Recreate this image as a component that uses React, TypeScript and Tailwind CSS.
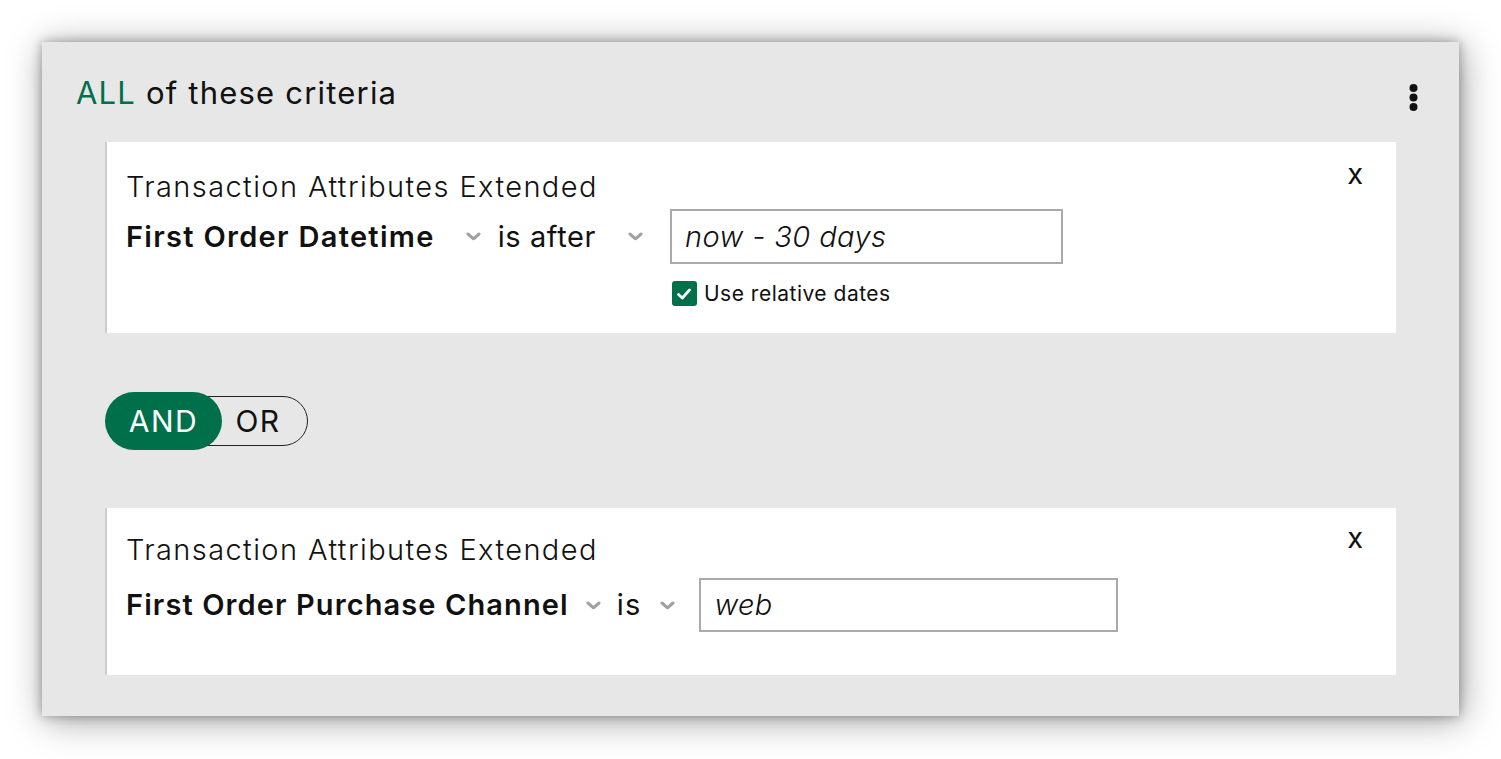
import React from "react";

const GREEN = "bg-[#00704a]";

function Chevron({ className = "" }: { className?: string }) {
  return (
    <svg width="15" height="9" viewBox="0 0 15 9" className={className}>
      <path d="M2 2 L7.5 6.8 L13 2" fill="none" stroke="#a0a0a0" strokeWidth="3" strokeLinecap="round" strokeLinejoin="round" />
    </svg>
  );
}

function Kebab() {
  return (
    <svg width="9" height="27" viewBox="0 0 9 27">
      <circle cx="4.5" cy="4" r="4" fill="#111" />
      <circle cx="4.5" cy="13.5" r="4" fill="#111" />
      <circle cx="4.5" cy="23" r="4" fill="#111" />
    </svg>
  );
}

export default function App() {
  return (
    <div
      className="w-[1501px] h-[759px] bg-white pt-[42px] pl-[42px] overflow-hidden"
      style={{ fontFamily: "Inter, 'Noto Sans', sans-serif" }}
    >
      <div className="w-[1417px] h-[674px] bg-[#e7e7e7] shadow-[0_0_10px_rgba(0,0,0,0.32),3px_4px_34px_rgba(0,0,0,0.38)] flex flex-col">
        {/* header */}
        <div className="flex justify-between pl-[34px] pr-[41px] pt-[32px] h-[100px]">
          <div className="text-[31px] leading-[38px] text-[#111] tracking-[1.2px]">
            <span className="text-[#00704a]">ALL</span> of these criteria
          </div>
          <div className="pt-[10px]">
            <Kebab />
          </div>
        </div>

        <div className="px-[63px]">
          {/* Card 1 */}
          <div className="bg-white border-l-2 border-[#cdcdcd] h-[191px] flex justify-between">
            <div className="pl-[19px] pt-[28px]">
              <div className="text-[29px] leading-[34px] font-light text-[#111] tracking-[1.4px] whitespace-nowrap">
                Transaction Attributes Extended
              </div>
              <div className="flex items-start mt-[5px]">
                <div className="flex items-center h-[55px]">
                  <span className="text-[29px] font-semibold text-[#111] tracking-[1.3px] whitespace-nowrap">First Order Datetime</span>
                  <Chevron className="ml-[31px]" />
                </div>
                <div className="flex items-center h-[55px] ml-[17px]">
                  <span className="text-[29px] text-[#111] tracking-[0.6px] whitespace-nowrap">is after</span>
                  <Chevron className="ml-[32px]" />
                </div>
                <div className="ml-[27px] flex flex-col">
                  <div className="w-[393px] h-[55px] border-2 border-[#aaaaaa] flex items-center pl-[13px]">
                    <span className="text-[29px] italic font-light text-[#111] tracking-[0.4px]">now - 30 days</span>
                  </div>
                  <div className="flex items-center mt-[14px] ml-[2px]">
                    <div className={`w-[25px] h-[25px] rounded-[3px] ${GREEN} flex items-center justify-center`}>
                      <svg width="16" height="14" viewBox="0 0 16 14">
                        <path d="M2.5 7.5 L6.3 11 L13.5 3" fill="none" stroke="white" strokeWidth="2.8" strokeLinecap="round" strokeLinejoin="round" />
                      </svg>
                    </div>
                    <span className="ml-[7px] text-[21px] text-[#111] tracking-[0.5px] whitespace-nowrap">Use relative dates</span>
                  </div>
                </div>
              </div>
            </div>
            <div className="pr-[33px] pt-[15px] text-[29px] leading-[34px] text-[#111]">x</div>
          </div>

          {/* AND / OR */}
          <div className="flex items-center mt-[59px] h-[58px]">
            <div className={`relative z-10 w-[117px] h-[58px] rounded-full ${GREEN} text-white text-[30px] flex items-center justify-center tracking-[1.5px]`}>
              AND
            </div>
            <div className="-ml-[28px] w-[114px] h-[50px] rounded-r-full border border-[#222] flex items-center justify-center pl-[14px] text-[30px] text-[#111] tracking-[1.5px]">
              OR
            </div>
          </div>

          {/* Card 2 */}
          <div className="mt-[58px] bg-white border-l-2 border-[#cdcdcd] h-[167px] flex justify-between">
            <div className="pl-[19px] pt-[25px]">
              <div className="text-[29px] leading-[34px] font-light text-[#111] tracking-[1.4px] whitespace-nowrap">
                Transaction Attributes Extended
              </div>
              <div className="flex items-start mt-[11px]">
                <div className="flex items-center h-[54px]">
                  <span className="text-[29px] font-semibold text-[#111] tracking-[1.1px] whitespace-nowrap">First Order Purchase Channel</span>
                  <Chevron className="ml-[17px]" />
                </div>
                <div className="flex items-center h-[54px] ml-[16px]">
                  <span className="text-[29px] text-[#111] tracking-[1.2px]">is</span>
                  <Chevron className="ml-[19px]" />
                </div>
                <div className="ml-[24px] w-[419px] h-[54px] border-2 border-[#aaaaaa] flex items-center pl-[13px]">
                  <span className="text-[29px] italic font-light text-[#111] tracking-[0.4px]">web</span>
                </div>
              </div>
            </div>
            <div className="pr-[33px] pt-[13px] text-[29px] leading-[34px] text-[#111]">x</div>
          </div>
        </div>
      </div>
    </div>
  );
}
